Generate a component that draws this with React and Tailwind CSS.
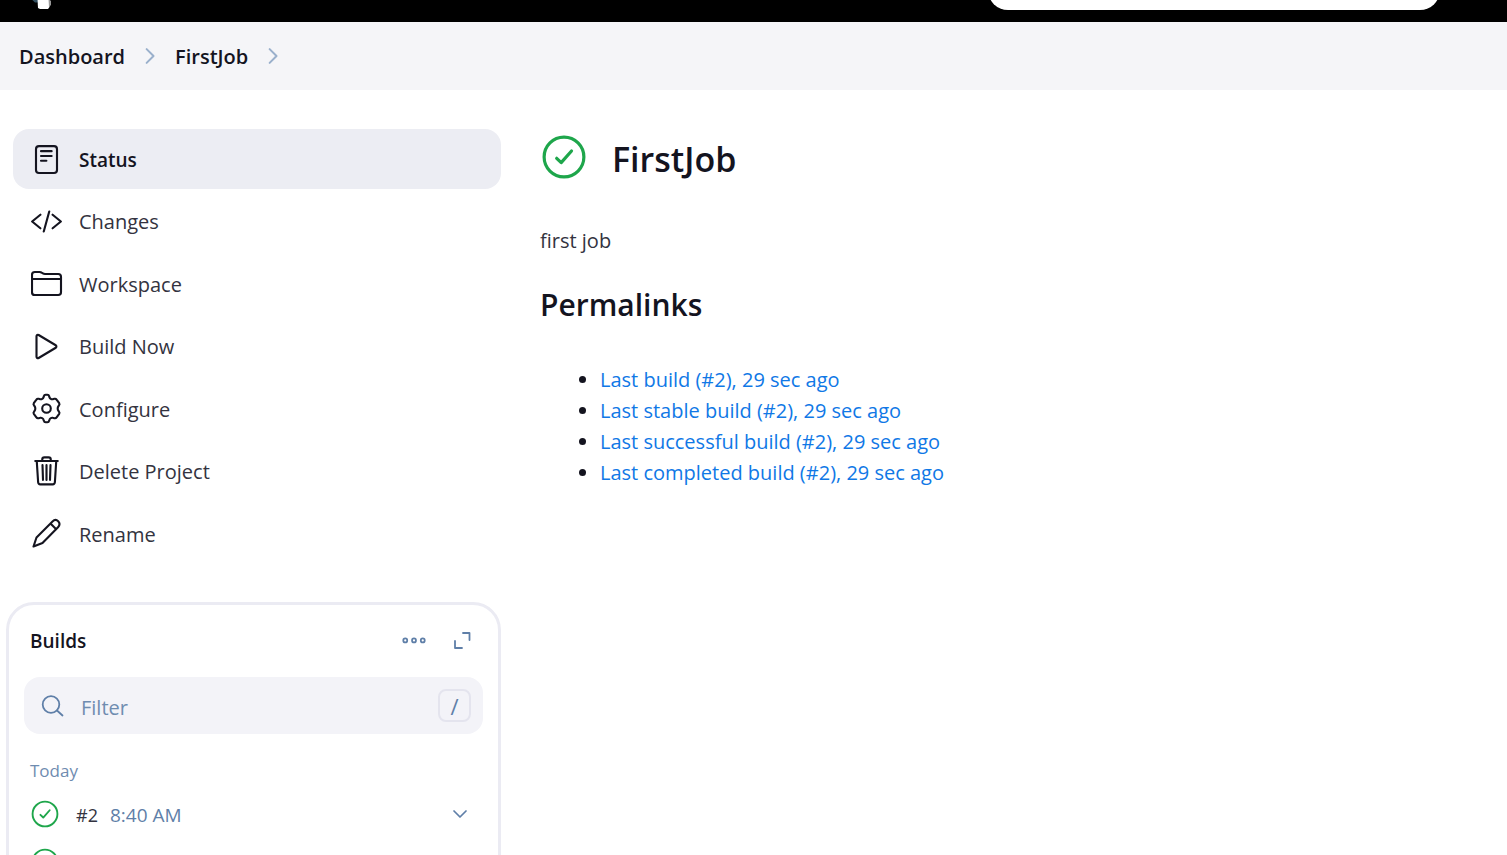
import React from "react";

const stroke = {
  fill: "none",
  stroke: "currentColor",
  strokeWidth: 34,
  strokeLinecap: "round",
  strokeLinejoin: "round",
};

function Icon({ className = "size-8", viewBox = "0 0 512 512", children, ...rest }) {
  return (
    <svg className={`${className} shrink-0`} viewBox={viewBox} aria-hidden="true" {...stroke} {...rest}>
      {children}
    </svg>
  );
}

const StatusIcon = () => (
  <Icon>
    <rect x="80" y="50" width="336" height="430" rx="48" />
    <path d="M160 130h170M160 208h170M160 284h86" />
  </Icon>
);
const ChangesIcon = () => (
  <Icon>
    <path d="M150 140L18 248l132 108M346 140l132 108-132 108M292 88L204 408" />
  </Icon>
);
const WorkspaceIcon = () => (
  <Icon>
    <path d="M480 176v212c0 28-16 44-44 44H60c-28 0-44-16-44-44V108c0-28 16-44 44-44h76c13 0 25 3 34 10l20 12c10 7 20 10 34 10h212c28 0 44 16 44 44v36zM16 176h464" />
  </Icon>
);
const PlayIcon = () => (
  <Icon>
    <path d="M88 84v328c0 18 18 28 34 20l274-164c14-8 14-32 0-40L122 64c-16-8-34 2-34 20z" />
  </Icon>
);
const GearIcon = () => (
  <Icon viewBox="0 0 32 32" strokeWidth="2.1">
    <circle cx="15.500" cy="15.500" r="4.300" />
    <path d="M12.900 3.200Q13.200 1.800 14.600 1.800h1.800Q17.800 1.800 18.100 3.200L18.500 4.400Q18.800 5.400 19.800 5.900Q20.800 6.500 21.800 6.200L23.300 5.800Q24.800 5.400 25.600 6.600L28.200 10.200Q28.900 11.300 28 12.300L27.300 13.300Q26.700 14.200 26.700 15.500Q26.700 16.800 27.300 17.700L28 18.700Q28.900 19.700 28.200 20.800L25.600 24.400Q24.800 25.600 23.300 25.200L21.800 24.800Q20.800 24.500 19.800 25.100Q18.800 25.600 18.500 26.600L18.100 27.800Q17.800 29.200 16.400 29.200h-1.800Q13.200 29.200 12.900 27.800L12.500 26.600Q12.200 25.600 11.200 25.100Q10.200 24.500 9.200 24.800L7.700 25.200Q6.200 25.600 5.400 24.400L2.800 20.800Q2.100 19.700 3 18.700L3.700 17.700Q4.300 16.800 4.300 15.500Q4.300 14.200 3.700 13.300L3 12.300Q2.100 11.300 2.800 10.200L5.400 6.600Q6.200 5.400 7.700 5.800L9.200 6.200Q10.200 6.500 11.200 5.900Q12.200 5.400 12.500 4.400z" />
  </Icon>
);
const TrashIcon = () => (
  <Icon>
    <path d="M92 80l22 340c2 22 14 34 34 34h200c20 0 32-12 34-34l22-340M68 80h360M180 76V56c0-22 12-34 34-34h68c22 0 34 12 34 34v20M248 146v236M184 146l8 236M312 146l-8 236" />
  </Icon>
);
const PencilIcon = () => (
  <Icon viewBox="0 0 32 32" strokeWidth="2.1">
    <path d="M2.500 28.500l3-9L21.500 3.500c3.800-3.800 9.500 1 5.500 5.800L11.500 25zM19.500 5.500l5.700 5.700" />
  </Icon>
);

const CheckCircle = ({ className = "size-[30px]", width = 32 }) => (
  <Icon className={`${className} text-[#1ea64b]`} strokeWidth={width}>
    <circle cx="256" cy="256" r="212" />
    <path d="M336 192L226 316l-48-46" />
  </Icon>
);
const ChevronRight = () => (
  <Icon className="size-5 text-[#9ab0cc]" strokeWidth="52">
    <path d="M170 80l176 176-176 176" />
  </Icon>
);

const tasks = [
  ["Status", StatusIcon],
  ["Changes", ChangesIcon],
  ["Workspace", WorkspaceIcon],
  ["Build Now", PlayIcon],
  ["Configure", GearIcon],
  ["Delete Project", TrashIcon],
  ["Rename", PencilIcon],
];

const permalinks = [
  "Last build (#2), 29 sec ago",
  "Last stable build (#2), 29 sec ago",
  "Last successful build (#2), 29 sec ago",
  "Last completed build (#2), 29 sec ago",
];

const builds = [
  ["#2", "8:40 AM"],
  ["#1", ""],
];

export default function App() {
  return (
    <div className="flex h-screen flex-col overflow-hidden bg-white font-['Open_Sans','Noto_Sans',sans-serif] text-[20px] leading-8 text-[#14141f]">
      <header className="flex h-[22px] shrink-0 items-end justify-between overflow-hidden bg-black pr-[67px] pl-7">
        <a href="#home" aria-label="Home" className="mb-3 shrink-0">
          <svg className="h-10 w-8" viewBox="0 0 32 40" aria-hidden="true">
            <path d="M0 26h11v6.500H7z" fill="#335061" />
            <path d="M9 20h12l.5 17-1.500 2h-8L10 38z" fill="#fff" />
            <path d="M20.500 29l2.500 2v4l-2 2z" fill="#999" />
          </svg>
        </a>
        <input
          type="search"
          aria-label="Search"
          className="mb-3 h-12 w-[452px] rounded-[20px] bg-white px-5 outline-none"
        />
      </header>

      <nav aria-label="Breadcrumb" className="flex h-[68px] shrink-0 items-center bg-[#f5f5f8] px-[19px] font-semibold">
        <a href="#dashboard" className="pt-0.5">Dashboard</a>
        <span className="mx-[15px]"><ChevronRight /></span>
        <a href="#job" className="pt-0.5">FirstJob</a>
        <span className="mx-[15px]"><ChevronRight /></span>
      </nav>

      <div className="flex min-h-0 flex-1 items-start">
        <aside className="w-[501px] shrink-0 pt-[39px] pl-[6px]">
          <nav aria-label="Tasks" className="ml-[7px] flex h-[435px] flex-col justify-between">
            {tasks.map(([label, Glyph], i) => (
              <a
                key={label}
                href={`#${label}`}
                aria-current={i === 0 ? "page" : undefined}
                className={`flex h-[60px] items-center gap-4 rounded-2xl px-[18px] ${i === 0 ? "bg-[#ecedf3] text-[19px] font-semibold" : "text-[#333340]"}`}
              >
                <span className="text-[#14141f]"><Glyph /></span>
                <span className="pt-px">{label}</span>
              </a>
            ))}
          </nav>

          <section className="mt-[38px] rounded-[28px] border-3 border-[#ebebf3] px-[15px] pb-6">
            <div className="flex h-[72px] items-center pr-[9px] pl-[6px] text-[#5f7fa8]">
              <h2 className="flex-1 text-[19px] font-semibold text-[#14141f]">Builds</h2>
              <button type="button" aria-label="More actions" className="mr-[22px]">
                <Icon className="size-7" strokeWidth="32">
                  <circle cx="256" cy="246" r="36" />
                  <circle cx="96" cy="246" r="36" />
                  <circle cx="416" cy="246" r="36" />
                </Icon>
              </button>
              <button type="button" aria-label="Expand builds">
                <Icon className="size-6" viewBox="0 0 24 24" strokeWidth="1.8">
                  <path d="M13 4h6.500v7M5 12v7h7" />
                </Icon>
              </button>
            </div>

            <label className="flex h-[57px] items-center gap-4 rounded-2xl bg-[#f3f3f8] pr-3 pl-[17px] text-[#5f7fa8]">
              <Icon className="size-6" viewBox="0 0 24 24" strokeWidth="1.8">
                <circle cx="10" cy="10.500" r="8.300" />
                <path d="M16 16.500l5.500 5" />
              </Icon>
              <input
                type="text"
                aria-label="Filter builds"
                placeholder="Filter"
                className="min-w-0 flex-1 bg-transparent pt-1 outline-none placeholder:text-[#6f8cb0]"
              />
              <kbd className="flex size-[33px] items-center justify-center rounded-lg border-2 border-[#e4e4ee] font-['Open_Sans',sans-serif] text-[22px]">
                /
              </kbd>
            </label>

            <h3 className="mt-[21px] pl-[6px] text-[17px] text-[#6f8cb0]">Today</h3>
            <ul className="mt-[3px]">
              {builds.map(([id, time]) => (
                <li key={id} className="flex h-[48px] items-center pr-[15px] pl-[6px] text-[19px]">
                  <CheckCircle />
                  <a href={`#build-${id}`} className="ml-4 pt-0.5 text-[18px] text-[#333340]">{id}</a>
                  <span className="ml-3 flex-1 pt-0.5 text-[#5f7fa8]">{time}</span>
                  <button type="button" aria-label={`Options for build ${id}`} className="text-[#5f7fa8]">
                    <Icon className="size-4" strokeWidth="56">
                      <path d="M64 160l192 192 192-192" />
                    </Icon>
                  </button>
                </li>
              ))}
            </ul>
          </section>
        </aside>

        <main className="min-w-0 flex-1 pt-[39px] pr-10 pl-[39px]">
          <div className="flex items-start gap-6 pt-1">
            <CheckCircle className="size-12" width={34} />
            <h1 className="pt-0.5 text-[34px] leading-[48px] font-semibold">FirstJob</h1>
          </div>
          <p className="mt-[42px] text-[#333340]">first job</p>
          <h2 className="mt-6 text-[30px] leading-[48px] font-semibold">Permalinks</h2>
          <ul className="mt-[35px] flex list-disc flex-col pl-[60px]">
            {permalinks.map((text) => (
              <li key={text} className="leading-[31px]">
                <a href="#build" className="text-[#1078e6]">{text}</a>
              </li>
            ))}
          </ul>
        </main>
      </div>
    </div>
  );
}
